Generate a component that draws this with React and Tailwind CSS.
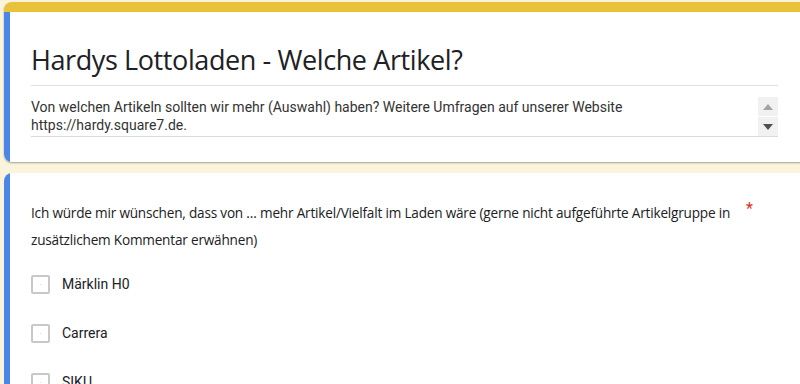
import React from "react";

function Check({ label }) {
  return (
    <div className="flex items-center h-[49px]">
      <div className="w-[19px] h-[19px] rounded-[2px] border-2 border-[#c8c8c8] bg-white flex items-center justify-center">
        <div className="w-[1px] h-[1px] bg-[#ddd]" />
      </div>
      <span className="ml-[12px] text-[14px] text-[#202124] font-['Roboto',sans-serif]">{label}</span>
    </div>
  );
}

export default function App() {
  return (
    <div className="w-[800px] h-[384px] overflow-hidden bg-[#fbf4dc] pt-[2px] pl-[4px]">
      <div className="w-[820px] rounded-t-[8px] bg-[#e9c13b] pt-[10px] shadow-[0_1px_2px_rgba(0,0,0,0.35)] rounded-b-[8px] overflow-hidden">
        <div className="flex bg-white">
          <div className="w-[6px] bg-[#4a86e8]" />
          <div className="flex-1 pl-[21px] pr-[42px] pt-[26px] pb-[25px]">
            <div className="w-[747px]">
              <div className="text-[27px] leading-[44px] text-[#202124] font-['Open_Sans',sans-serif] tracking-[-0.4px] pb-[3px] border-b border-[#e0e0e0]">
                Hardys Lottoladen - Welche Artikel?
              </div>
              <div className="flex border-b border-[#dadada] mt-[11px]">
                <div className="flex-1 text-[14px] leading-[18px] text-[#333] font-['Roboto',sans-serif] py-[1px]">
                  Von welchen Artikeln sollten wir mehr (Auswahl) haben? Weitere Umfragen auf unserer Website https://hardy.square7.de.
                </div>
                <div className="w-[20px] ml-[10px] bg-[#f1f1f1] flex flex-col items-center">
                  <div className="h-[19px] flex items-center justify-center">
                    <svg width="10" height="6" viewBox="0 0 10 6"><path d="M0 6 L5 0 L10 6Z" fill="#a3a3a3" /></svg>
                  </div>
                  <div className="w-full h-[1px] bg-white" />
                  <div className="h-[19px] flex items-center justify-center">
                    <svg width="10" height="6" viewBox="0 0 10 6"><path d="M0 0 L10 0 L5 6Z" fill="#505050" /></svg>
                  </div>
                </div>
              </div>
            </div>
          </div>
        </div>
      </div>
      <div className="mt-[11px] w-[820px] rounded-t-[8px] bg-white flex h-[300px] overflow-hidden">
        <div className="w-[6px] bg-[#4a86e8]" />
        <div className="flex-1 pl-[21px] pt-[26px]">
          <div className="flex w-[727px]">
            <div className="flex-1 text-[13.6px] leading-[27px] text-[#202124] font-['Open_Sans',sans-serif] tracking-[-0.2px]">
              Ich würde mir wünschen, dass von … mehr Artikel/Vielfalt im Laden wäre (gerne nicht aufgeführte Artikelgruppe in zusätzlichem Kommentar erwähnen)
            </div>
            <div className="w-[20px] text-[#d93025] text-[16px] leading-[20px] pl-[8px] font-['Roboto',sans-serif]">*</div>
          </div>
          <div className="mt-[7px]">
            <Check label="Märklin H0" />
            <Check label="Carrera" />
            <Check label="SIKU" />
          </div>
        </div>
      </div>
    </div>
  );
}
